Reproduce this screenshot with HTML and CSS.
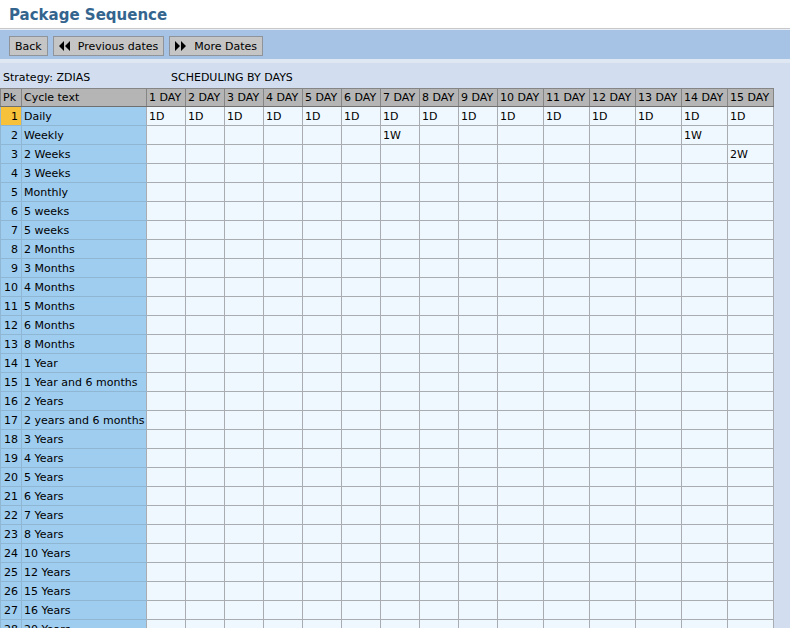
FILE: index.html
```html
<!DOCTYPE html>
<html>
<head>
<meta charset="utf-8">
<link rel="stylesheet" href="styles.css">
</head>
<body>
<div class="title-bar"><h1 class="title">Package Sequence</h1></div>
<div class="toolbar">
  <button class="btn">Back</button>
  <button class="btn"><svg class="ico" width="11" height="10" viewBox="0 0 11 10"><path d="M5 0L0 5L5 10Z M11 0L6 5L11 10Z" fill="#000"/></svg>Previous dates</button>
  <button class="btn"><svg class="ico" width="11" height="10" viewBox="0 0 11 10"><path d="M0 0L5 5L0 10Z M6 0L11 5L6 10Z" fill="#000"/></svg>More Dates</button>
</div>
<div class="panel">
  <div class="info"><span class="strategy">Strategy: ZDIAS</span><span>SCHEDULING BY DAYS</span></div>
  <table class="grid">
    <colgroup>
      <col class="c-pk"><col class="c-txt">
      <col class="c-d"><col class="c-d"><col class="c-d"><col class="c-d"><col class="c-d"><col class="c-d"><col class="c-d"><col class="c-d"><col class="c-d">
      <col class="c-w"><col class="c-w"><col class="c-w"><col class="c-w"><col class="c-w"><col class="c-w">
    </colgroup>
    <thead>
      <tr><th>Pk</th><th>Cycle text</th><th>1 DAY</th><th>2 DAY</th><th>3 DAY</th><th>4 DAY</th><th>5 DAY</th><th>6 DAY</th><th>7 DAY</th><th>8 DAY</th><th>9 DAY</th><th>10 DAY</th><th>11 DAY</th><th>12 DAY</th><th>13 DAY</th><th>14 DAY</th><th>15 DAY</th></tr>
    </thead>
    <tbody>
      <tr><td class="pk sel">1</td><td class="txt">Daily</td><td>1D</td><td>1D</td><td>1D</td><td>1D</td><td>1D</td><td>1D</td><td>1D</td><td>1D</td><td>1D</td><td>1D</td><td>1D</td><td>1D</td><td>1D</td><td>1D</td><td>1D</td></tr>
      <tr><td class="pk">2</td><td class="txt">Weekly</td><td></td><td></td><td></td><td></td><td></td><td></td><td>1W</td><td></td><td></td><td></td><td></td><td></td><td></td><td>1W</td><td></td></tr>
      <tr><td class="pk">3</td><td class="txt">2 Weeks</td><td></td><td></td><td></td><td></td><td></td><td></td><td></td><td></td><td></td><td></td><td></td><td></td><td></td><td></td><td>2W</td></tr>
      <tr><td class="pk">4</td><td class="txt">3 Weeks</td><td></td><td></td><td></td><td></td><td></td><td></td><td></td><td></td><td></td><td></td><td></td><td></td><td></td><td></td><td></td></tr>
      <tr><td class="pk">5</td><td class="txt">Monthly</td><td></td><td></td><td></td><td></td><td></td><td></td><td></td><td></td><td></td><td></td><td></td><td></td><td></td><td></td><td></td></tr>
      <tr><td class="pk">6</td><td class="txt">5 weeks</td><td></td><td></td><td></td><td></td><td></td><td></td><td></td><td></td><td></td><td></td><td></td><td></td><td></td><td></td><td></td></tr>
      <tr><td class="pk">7</td><td class="txt">5 weeks</td><td></td><td></td><td></td><td></td><td></td><td></td><td></td><td></td><td></td><td></td><td></td><td></td><td></td><td></td><td></td></tr>
      <tr><td class="pk">8</td><td class="txt">2 Months</td><td></td><td></td><td></td><td></td><td></td><td></td><td></td><td></td><td></td><td></td><td></td><td></td><td></td><td></td><td></td></tr>
      <tr><td class="pk">9</td><td class="txt">3 Months</td><td></td><td></td><td></td><td></td><td></td><td></td><td></td><td></td><td></td><td></td><td></td><td></td><td></td><td></td><td></td></tr>
      <tr><td class="pk">10</td><td class="txt">4 Months</td><td></td><td></td><td></td><td></td><td></td><td></td><td></td><td></td><td></td><td></td><td></td><td></td><td></td><td></td><td></td></tr>
      <tr><td class="pk">11</td><td class="txt">5 Months</td><td></td><td></td><td></td><td></td><td></td><td></td><td></td><td></td><td></td><td></td><td></td><td></td><td></td><td></td><td></td></tr>
      <tr><td class="pk">12</td><td class="txt">6 Months</td><td></td><td></td><td></td><td></td><td></td><td></td><td></td><td></td><td></td><td></td><td></td><td></td><td></td><td></td><td></td></tr>
      <tr><td class="pk">13</td><td class="txt">8 Months</td><td></td><td></td><td></td><td></td><td></td><td></td><td></td><td></td><td></td><td></td><td></td><td></td><td></td><td></td><td></td></tr>
      <tr><td class="pk">14</td><td class="txt">1 Year</td><td></td><td></td><td></td><td></td><td></td><td></td><td></td><td></td><td></td><td></td><td></td><td></td><td></td><td></td><td></td></tr>
      <tr><td class="pk">15</td><td class="txt">1 Year and 6 months</td><td></td><td></td><td></td><td></td><td></td><td></td><td></td><td></td><td></td><td></td><td></td><td></td><td></td><td></td><td></td></tr>
      <tr><td class="pk">16</td><td class="txt">2 Years</td><td></td><td></td><td></td><td></td><td></td><td></td><td></td><td></td><td></td><td></td><td></td><td></td><td></td><td></td><td></td></tr>
      <tr><td class="pk">17</td><td class="txt">2 years and 6 months</td><td></td><td></td><td></td><td></td><td></td><td></td><td></td><td></td><td></td><td></td><td></td><td></td><td></td><td></td><td></td></tr>
      <tr><td class="pk">18</td><td class="txt">3 Years</td><td></td><td></td><td></td><td></td><td></td><td></td><td></td><td></td><td></td><td></td><td></td><td></td><td></td><td></td><td></td></tr>
      <tr><td class="pk">19</td><td class="txt">4 Years</td><td></td><td></td><td></td><td></td><td></td><td></td><td></td><td></td><td></td><td></td><td></td><td></td><td></td><td></td><td></td></tr>
      <tr><td class="pk">20</td><td class="txt">5 Years</td><td></td><td></td><td></td><td></td><td></td><td></td><td></td><td></td><td></td><td></td><td></td><td></td><td></td><td></td><td></td></tr>
      <tr><td class="pk">21</td><td class="txt">6 Years</td><td></td><td></td><td></td><td></td><td></td><td></td><td></td><td></td><td></td><td></td><td></td><td></td><td></td><td></td><td></td></tr>
      <tr><td class="pk">22</td><td class="txt">7 Years</td><td></td><td></td><td></td><td></td><td></td><td></td><td></td><td></td><td></td><td></td><td></td><td></td><td></td><td></td><td></td></tr>
      <tr><td class="pk">23</td><td class="txt">8 Years</td><td></td><td></td><td></td><td></td><td></td><td></td><td></td><td></td><td></td><td></td><td></td><td></td><td></td><td></td><td></td></tr>
      <tr><td class="pk">24</td><td class="txt">10 Years</td><td></td><td></td><td></td><td></td><td></td><td></td><td></td><td></td><td></td><td></td><td></td><td></td><td></td><td></td><td></td></tr>
      <tr><td class="pk">25</td><td class="txt">12 Years</td><td></td><td></td><td></td><td></td><td></td><td></td><td></td><td></td><td></td><td></td><td></td><td></td><td></td><td></td><td></td></tr>
      <tr><td class="pk">26</td><td class="txt">15 Years</td><td></td><td></td><td></td><td></td><td></td><td></td><td></td><td></td><td></td><td></td><td></td><td></td><td></td><td></td><td></td></tr>
      <tr><td class="pk">27</td><td class="txt">16 Years</td><td></td><td></td><td></td><td></td><td></td><td></td><td></td><td></td><td></td><td></td><td></td><td></td><td></td><td></td><td></td></tr>
      <tr><td class="pk">28</td><td class="txt">20 Years</td><td></td><td></td><td></td><td></td><td></td><td></td><td></td><td></td><td></td><td></td><td></td><td></td><td></td><td></td><td></td></tr>
    </tbody>
  </table>
</div>
</body>
</html>
```
FILE: styles.css
```css
html, body {
  margin: 0;
  padding: 0;
  height: 100%;
  overflow: hidden;
}
body {
  font-family: "DejaVu Sans", sans-serif;
  font-size: 11px;
  color: #000;
  background: #d2deef;
}
.title-bar {
  background: #fff;
  height: 29px;
  border-bottom: 1px solid #c8c8c8;
  padding-left: 9px;
  box-sizing: border-box;
}
.title {
  margin: 0;
  font-size: 15px;
  font-weight: bold;
  color: #34658f;
  line-height: 31px;
}
.toolbar {
  background: #a6c3e5;
  border-top: 1px solid #e8eef6;
  height: 30px;
  box-sizing: border-box;
  display: flex;
  align-items: flex-start;
  gap: 5px;
  padding: 6px 0 0 9px;
}
.btn {
  font-family: "DejaVu Sans", sans-serif;
  font-size: 11px;
  color: #000;
  background: #c5c5c5;
  border: 1px solid #8e9499;
  height: 20px;
  padding: 0 5px;
  display: flex;
  align-items: center;
  gap: 8px;
}
.ico { display: block; }
.panel {
  border-top: 4px solid #dfe7f2;
}
.info {
  display: flex;
  height: 25px;
  align-items: center;
  padding: 4px 0 0 3px;
  box-sizing: border-box;
}
.strategy { width: 168px; }
.grid {
  border-collapse: collapse;
  table-layout: fixed;
  width: 773px;
}
.c-pk { width: 21px; }
.c-txt { width: 125px; }
.c-d { width: 39px; }
.c-w { width: 46px; }
.grid th {
  background: #b5b5b5;
  border: 1px solid #858585;
  border-bottom: 1px solid #6f6f6f;
  font-weight: normal;
  text-align: left;
  height: 17px;
  padding: 0 1px 0 2px;
  white-space: nowrap;
  overflow: hidden;
}
.grid td {
  background: #f0f8ff;
  border: 1px solid #a9adb2;
  height: 18px;
  padding: 0 2px;
  white-space: nowrap;
  overflow: hidden;
}
.grid td.pk {
  background: #9ecdf0;
  text-align: right;
  padding: 0 3px 0 0;
  border-color: #8fb6d3;
}
.grid td.txt {
  background: #9ecdf0;
  border-color: #8fb6d3;
  border-right-color: #a9adb2;
}
.grid td.pk.sel {
  background: #f7c23a;
}
```
